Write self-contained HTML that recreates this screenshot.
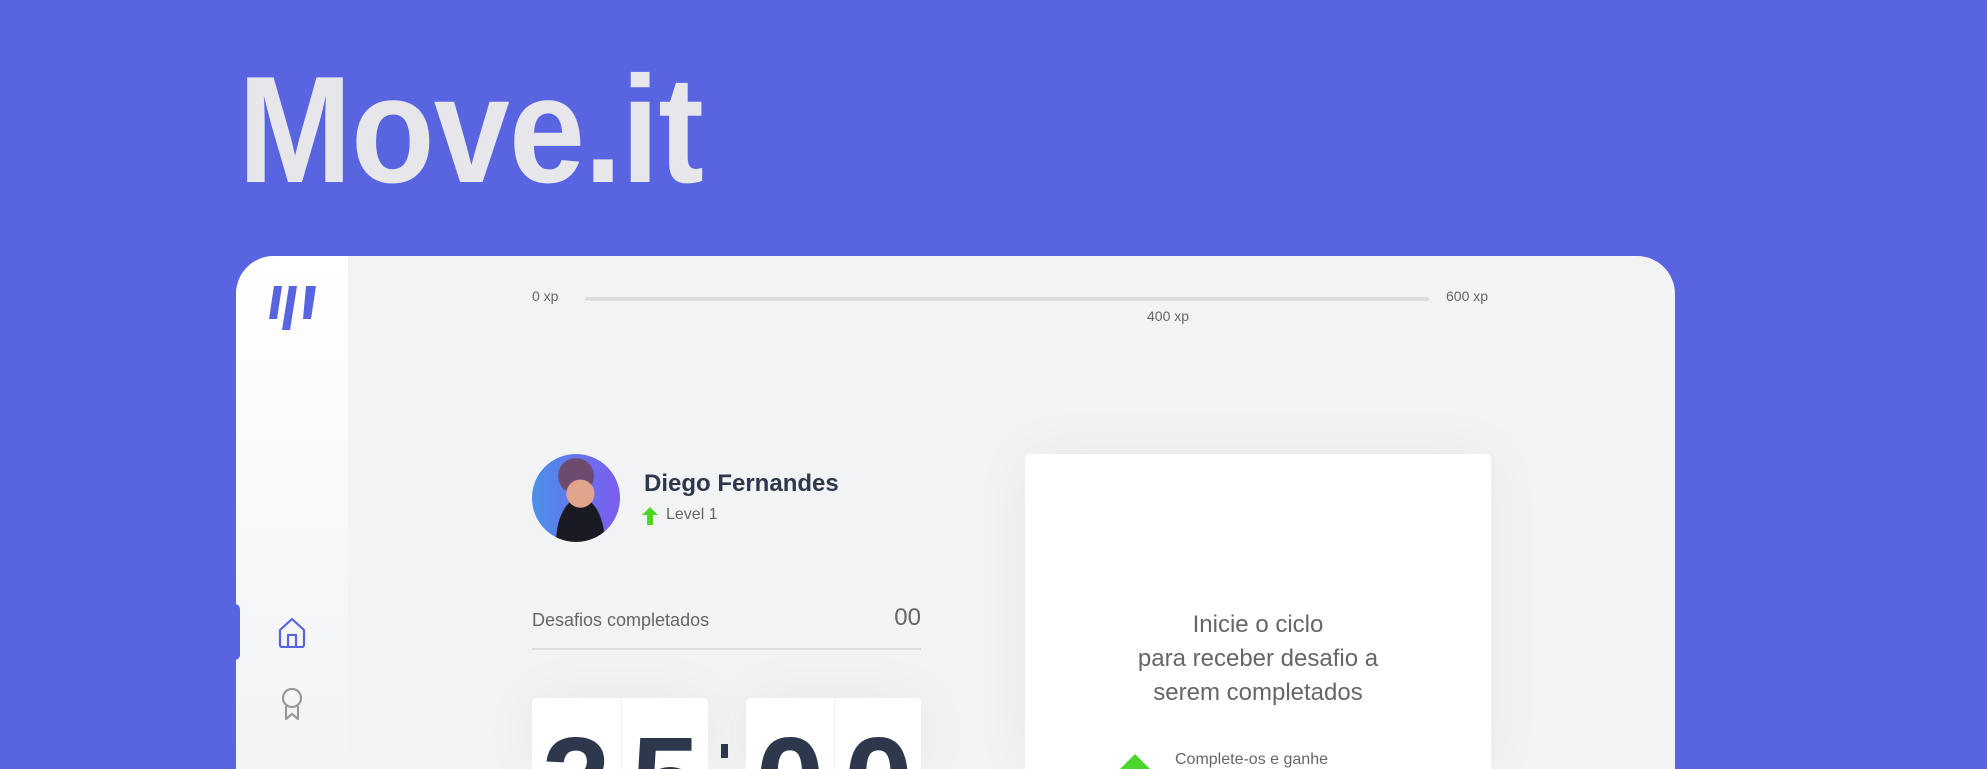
<!DOCTYPE html>
<html><head><meta charset="utf-8"><style>
*{margin:0;padding:0;box-sizing:border-box}
body{width:1987px;height:769px;overflow:hidden;background:#5965E0;font-family:"Liberation Sans",sans-serif;position:relative}
.title{position:absolute;left:238px;top:54px;font-size:152px;font-weight:700;color:#E6E6EB;letter-spacing:-1px;transform:scaleX(0.9);transform-origin:left top;line-height:1}
.panel{position:absolute;left:236px;top:256px;width:1439px;height:513px;background:#F2F3F5;border-radius:38px 38px 0 0;overflow:hidden}
.side{position:absolute;left:0;top:0;width:112px;height:100%;background:linear-gradient(180deg,#fff 0%,#F2F3F5 100%)}
.abs{position:absolute}
.sm{font-size:14px;color:#666}
.bar{position:absolute;left:349px;top:41px;width:844px;height:4px;border-radius:2px;background:#DCDDE0}
.card{position:absolute;background:#fff;border-radius:5px 5px 0 0;box-shadow:0 0 60px rgba(0,0,0,0.05);overflow:hidden}
.dig{position:absolute;top:0;width:88px;height:71px;text-align:center;font-size:124px;font-weight:700;color:#2E384D;line-height:1;padding-top:22px;overflow:hidden}
</style></head><body>
<div class="title">Move.it</div>
<div class="panel">
  <div class="side"></div>
  <svg class="abs" style="left:32px;top:30px" width="50" height="44" viewBox="0 0 50 44"><g fill="#5965E0"><polygon points="6,0 14,0 9,33 1,33"/><polygon points="21,0 29,0 22,44 14,44"/><polygon points="38,0 48,0 43,33 35,33"/></g></svg>
  <div class="abs" style="left:-6px;top:348px;width:10px;height:56px;background:#5965E0;border-radius:0 5px 5px 0"></div>
  <svg class="abs" style="left:42px;top:362px" width="28" height="30" viewBox="0 0 28 30" fill="none" stroke="#5965E0" stroke-width="2.2" stroke-linejoin="round"><path d="M2 12 L14 1 L26 12 V27 a2 2 0 0 1 -2 2 H4 a2 2 0 0 1 -2 -2 Z"/><path d="M10 29 V17 H18 V29"/></svg>
  <svg class="abs" style="left:44px;top:432px" width="24" height="34" viewBox="0 0 24 34" fill="none" stroke="#999" stroke-width="2.2" stroke-linejoin="round"><circle cx="12" cy="10" r="9"/><path d="M6 18 V31 L12 26 L18 31 V18"/></svg>
  <div class="abs sm" style="left:296px;top:32px">0 xp</div>
  <div class="bar"></div>
  <div class="abs sm" style="left:1210px;top:32px">600 xp</div>
  <div class="abs sm" style="left:911px;top:52px">400 xp</div>
  <div class="abs" style="left:296px;top:198px;width:88px;height:88px;border-radius:50%;background:radial-gradient(circle at 55% 45%,#e0a58a 0 20%,transparent 21%),radial-gradient(circle at 50% 25%,#6b4a6e 0 22%,transparent 23%),radial-gradient(ellipse at 55% 100%,#1a1a22 0 35%,transparent 36%),linear-gradient(90deg,#4a90e8,#7d5cf0)"></div>
  <div class="abs" style="left:408px;top:214px;font-size:24px;font-weight:600;color:#2E384D">Diego Fernandes</div>
  <svg class="abs" style="left:406px;top:251px" width="16" height="18" viewBox="0 0 16 18"><path d="M8 0 L16 8 H11 V18 H5 V8 H0 Z" fill="#4CD62B"/></svg>
  <div class="abs" style="left:430px;top:250px;font-size:16px;color:#666">Level 1</div>
  <div class="abs" style="left:296px;top:354px;font-size:18px;color:#666">Desafios completados</div>
  <div class="abs" style="left:620px;top:348px;width:65px;text-align:right;font-size:24px;color:#666">00</div>
  <div class="abs" style="left:296px;top:392px;width:389px;height:2px;background:#DCDDE0"></div>
  <div class="card" style="left:296px;top:442px;width:176px;height:71px"><div class="dig" style="left:0">2</div><div class="dig" style="left:89px;border-left:1px solid #F0F1F3">5</div></div>
  <div class="abs" style="left:485px;top:488px;width:7px;height:14px;background:#2E384D"></div>
  <div class="card" style="left:510px;top:442px;width:175px;height:71px"><div class="dig" style="left:0">0</div><div class="dig" style="left:88px;border-left:1px solid #F0F1F3">0</div></div>
  <div class="card" style="left:789px;top:198px;width:466px;height:315px">
    <div class="abs" style="left:0;top:154px;width:466px;text-align:center;font-size:24px;line-height:34px;color:#666">Inicie o ciclo<br>para receber desafio a<br>serem completados</div>
    <svg class="abs" style="left:94px;top:300px" width="32" height="15" viewBox="0 0 32 15"><path d="M16 0 L32 16 H0 Z" fill="#4CD62B"/></svg>
    <div class="abs" style="left:150px;top:297px;font-size:16px;color:#666;line-height:18px">Complete-os e ganhe</div>
  </div>
</div>
</body></html>
